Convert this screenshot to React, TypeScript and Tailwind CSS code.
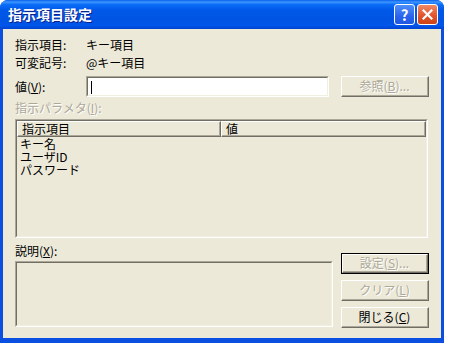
import React from 'react';

const font = 'font-["Noto_Sans_CJK_JP","Liberation_Sans",sans-serif]';

function Btn({ children, disabled, isDefault }: { children: React.ReactNode; disabled?: boolean; isDefault?: boolean }) {
  return (
    <div className={`h-[21px] w-[88px] ${isDefault ? 'border border-black' : ''}`}>
      <div className="h-full w-full border-t border-l border-t-white border-l-white border-r border-b border-r-[#716f64] border-b-[#716f64]">
        <div
          className={`flex h-full w-full items-center justify-center border-r border-b border-r-[#aca899] border-b-[#aca899] text-[12px] ${
            disabled ? 'text-[#aca899] [text-shadow:1px_1px_0_#fff]' : 'text-black'
          }`}
        >
          {children}
        </div>
      </div>
    </div>
  );
}

function Sunken({ className, children }: { className: string; children?: React.ReactNode }) {
  return (
    <div className={`border-t border-l border-t-[#aca899] border-l-[#aca899] border-r border-b border-r-white border-b-white ${className}`}>
      <div className="h-full w-full border-t border-l border-t-[#716f64] border-l-[#716f64] border-r border-b border-r-[#f1efe2] border-b-[#f1efe2]">
        {children}
      </div>
    </div>
  );
}

function HeaderCell({ w, children }: { w: string; children: React.ReactNode }) {
  return (
    <div className={`${w} h-[16px] border-t border-l border-t-white border-l-white border-r border-b border-r-[#716f64] border-b-[#716f64]`}>
      <div className="flex h-full items-center border-r border-b border-r-[#aca899] border-b-[#aca899] pl-[4px] text-[12px] leading-[13px]">
        {children}
      </div>
    </div>
  );
}

export default function App() {
  return (
    <div className={`h-[348px] w-[452px] bg-white ${font}`}>
      <div className="flex h-[343px] w-[444px] flex-col overflow-hidden rounded-t-[8px] bg-[#0a4fe0]">
        {/* Title bar */}
        <div className="flex h-[29px] shrink-0 items-center bg-[linear-gradient(to_bottom,#0a5fea_0%,#3d95ff_7%,#0a6cf6_16%,#0058e8_35%,#0054e3_70%,#0055eb_88%,#0043cf_100%)] pl-[8px] pr-[6px]">
          <span className="text-[14px] font-bold text-white [text-shadow:1px_1px_0_#0b1f8a]">指示項目設定</span>
          <div className="ml-auto flex gap-[2px]">
            <div className="flex h-[21px] w-[21px] items-center justify-center rounded-[3px] border border-white bg-[linear-gradient(to_bottom,#4f8ff8,#2a64ee_60%,#1f56e2)] text-[15px] font-bold leading-none text-white">
              ?
            </div>
            <div className="flex h-[21px] w-[21px] items-center justify-center rounded-[3px] border border-white bg-[linear-gradient(to_bottom,#f08a68,#e2552e_55%,#cc4318)]">
              <svg width="11" height="11" viewBox="0 0 11 11">
                <path d="M1.5 1.5 L9.5 9.5 M9.5 1.5 L1.5 9.5" stroke="white" strokeWidth="2.2" strokeLinecap="square" />
              </svg>
            </div>
          </div>
        </div>

        {/* Body */}
        <div className="mx-[3px] mb-[5px] flex-1 bg-[#ece9d8] pl-[12px] pt-[7px] text-[12px] text-black">
          <div className="flex h-[18px] items-center">
            <span className="w-[71px]">指示項目:</span>
            <span>キー項目</span>
          </div>
          <div className="flex h-[18px] items-center">
            <span className="w-[71px]">可変記号:</span>
            <span>@キー項目</span>
          </div>
          <div className="mt-[4px] flex h-[21px] items-center">
            <span className="w-[71px]">
              値(<span className="underline">V</span>):
            </span>
            <Sunken className="h-[21px] w-[243px] bg-white">
              <div className="ml-[3px] mt-[3px] h-[13px] w-px bg-black" />
            </Sunken>
            <div className="ml-[12px]">
              <Btn disabled>
                参照(<span className="underline">B</span>)...
              </Btn>
            </div>
          </div>
          <div className="mt-[4px] leading-[14px] text-[#aca899] [text-shadow:1px_1px_0_#fff]">
            指示パラメタ(<span className="underline">I</span>):
          </div>
          <Sunken className="mt-[4px] h-[119px] w-[413px]">
            <div className="flex">
              <HeaderCell w="w-[204px]">指示項目</HeaderCell>
              <HeaderCell w="w-[205px]">値</HeaderCell>
            </div>
            <div className="pl-[3px] text-[12px] leading-[13px]">
              <div className="h-[13px]">キー名</div>
              <div className="h-[13px]">ユーザID</div>
              <div className="h-[13px]">パスワード</div>
            </div>
          </Sunken>
          <div className="flex">
            <div className="w-[318px]">
              <div className="mt-[6px] leading-[14px]">
                説明(<span className="underline">X</span>):
              </div>
              <Sunken className="mt-[3px] h-[66px] w-[318px]" />
            </div>
            <div className="ml-[8px] mt-[15px] flex flex-col gap-[6px]">
              <Btn disabled isDefault>
                設定(<span className="underline">S</span>)...
              </Btn>
              <Btn disabled>
                クリア(<span className="underline">L</span>)
              </Btn>
              <Btn>
                閉じる(<span className="underline">C</span>)
              </Btn>
            </div>
          </div>
        </div>
      </div>
    </div>
  );
}
